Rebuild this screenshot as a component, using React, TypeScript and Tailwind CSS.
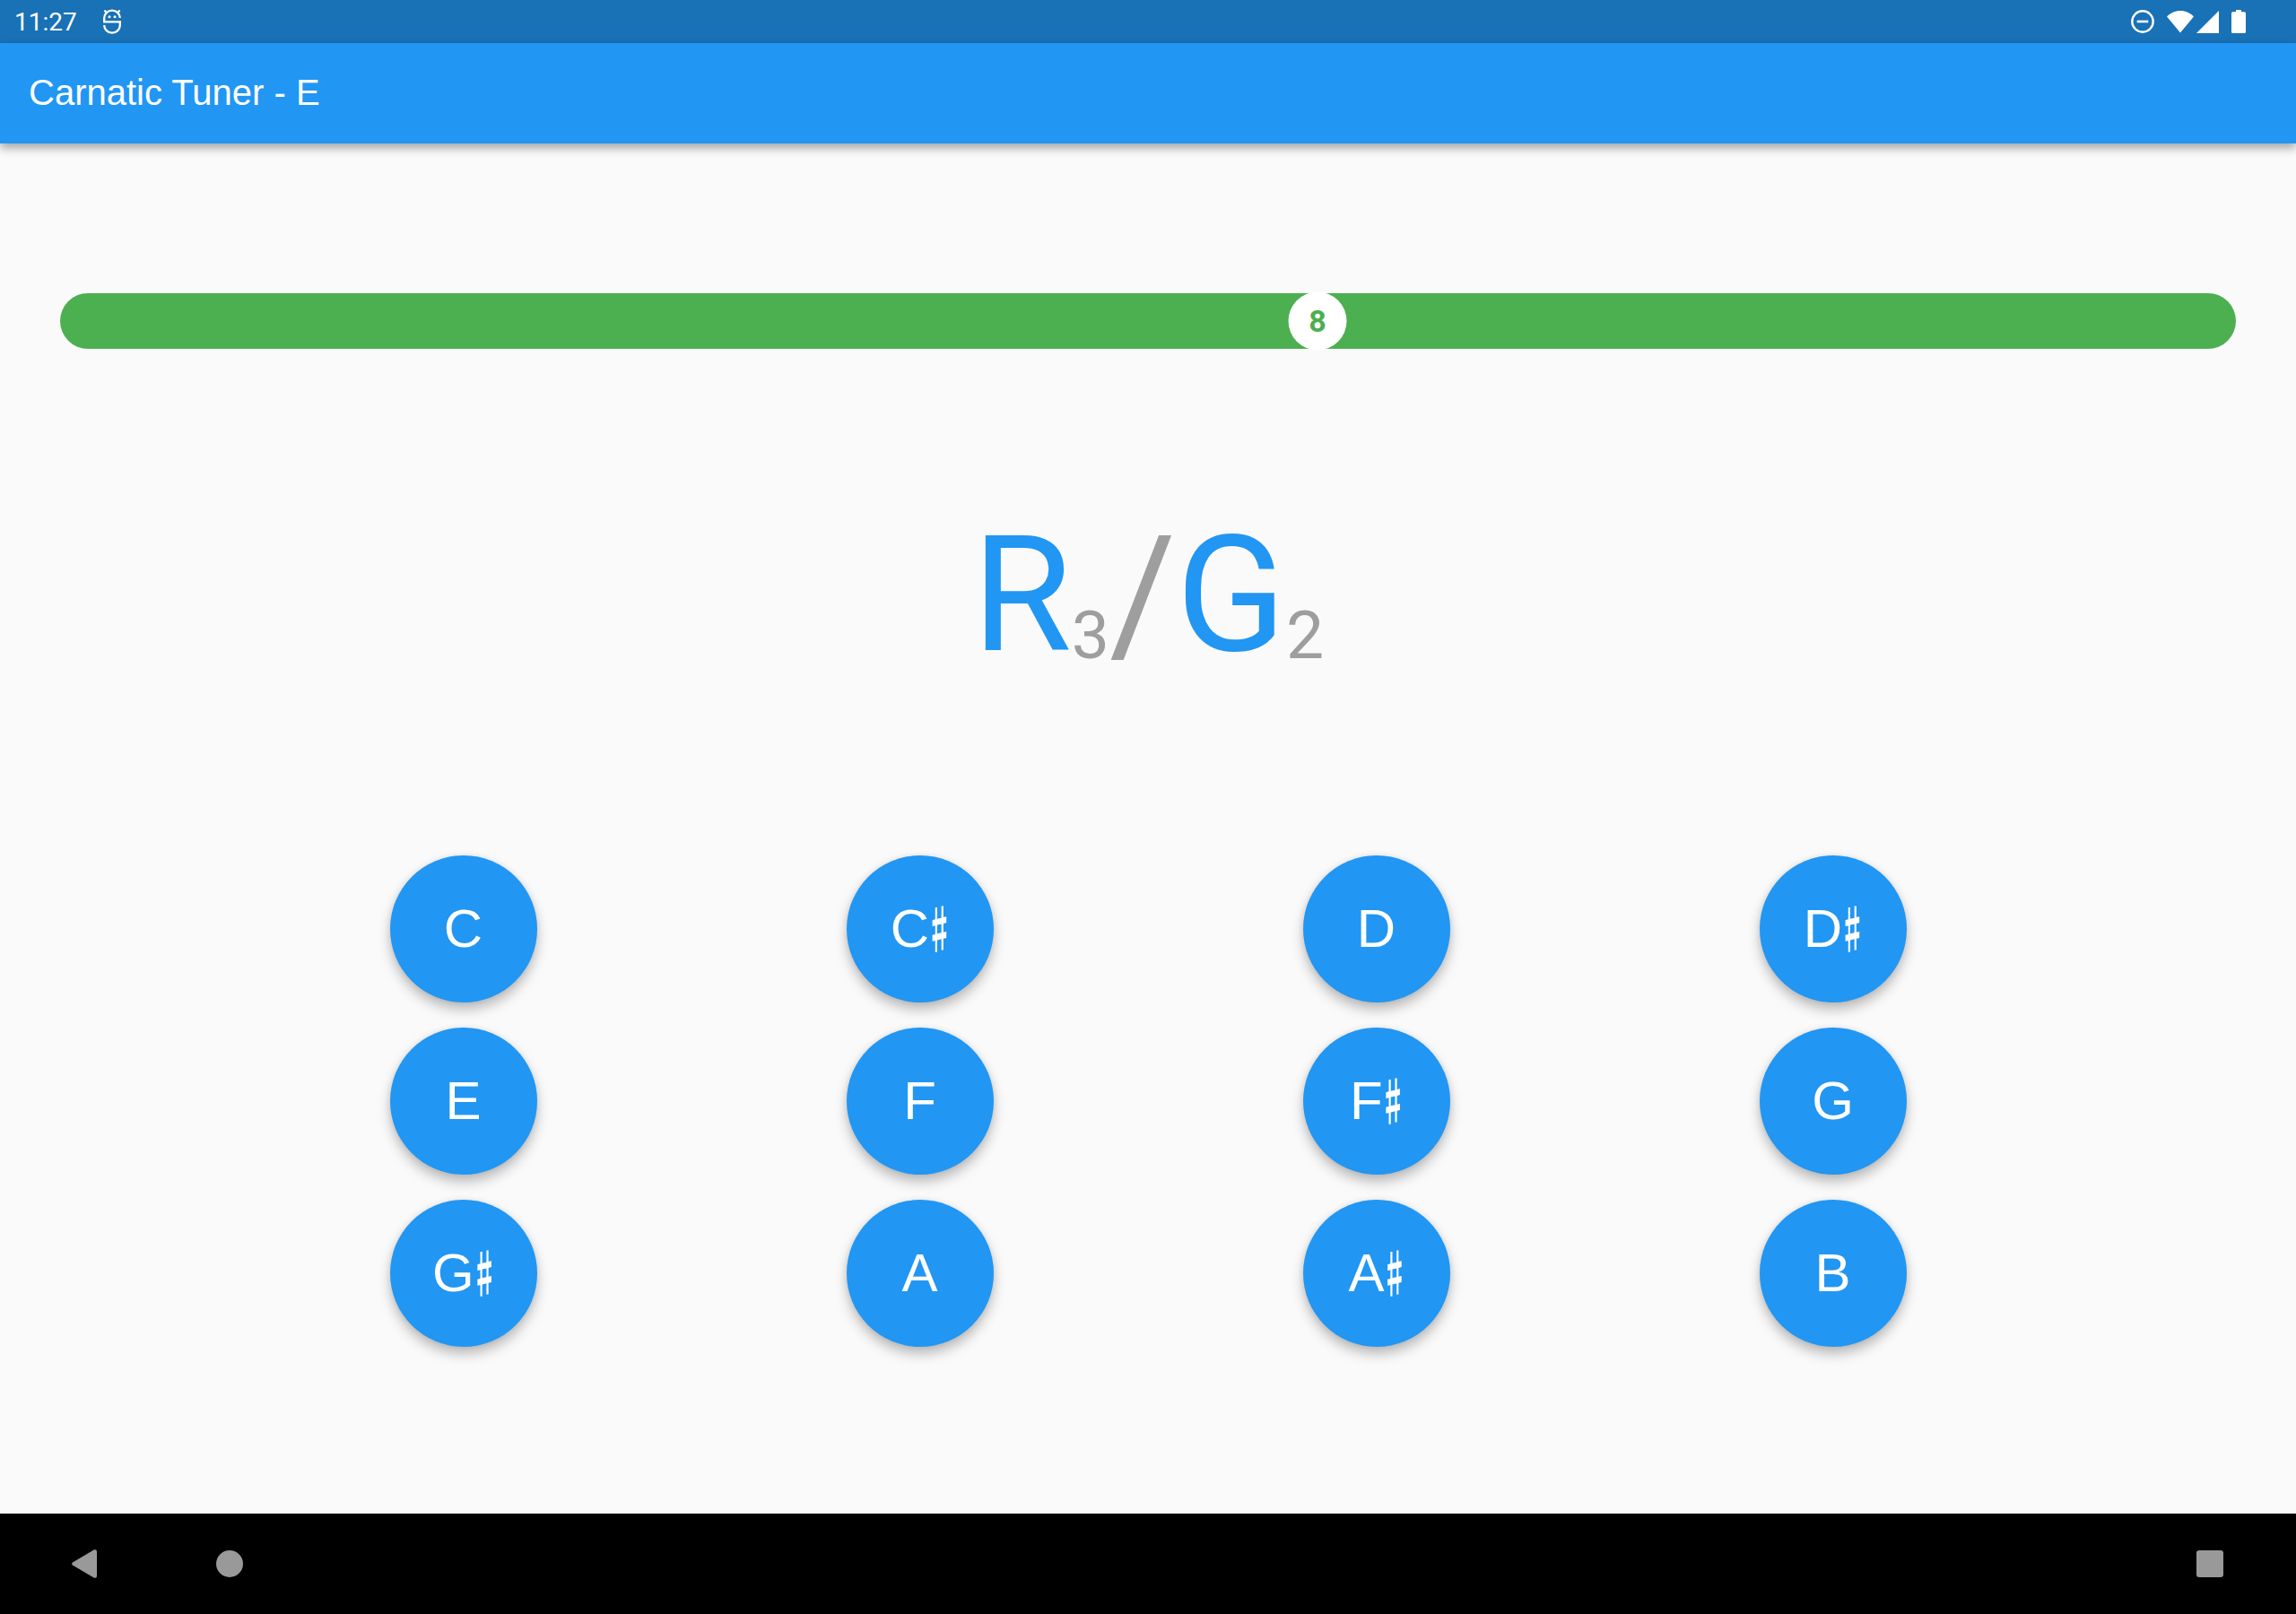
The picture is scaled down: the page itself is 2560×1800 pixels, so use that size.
const NOTES = ["C", "C♯", "D", "D♯", "E", "F", "F♯", "G", "G♯", "A", "A♯", "B"];

const CENTS = 8;

function DebugIcon() {
  return (
    <svg className="h-7 w-5" viewBox="0 0 20 28" fill="none" stroke="#fff" strokeWidth="2.300" aria-hidden="true">
      <path d="M18.800 10A8.800 8.300 0 0 0 1.200 10V14.300H18.800V18A8.800 8.600 0 0 1 1.200 18" />
      <path d="M1.500 1.500L4.500 5M18.500 1.500L15.500 5" />
      <circle cx="7" cy="8.700" r="1.500" fill="#fff" stroke="none" />
      <circle cx="13" cy="8.700" r="1.500" fill="#fff" stroke="none" />
    </svg>
  );
}

function StatusBar() {
  return (
    <div className="flex h-12 items-center justify-between bg-[#1971b6] pl-4 pr-14 text-white">
      <div className="flex items-center gap-[29px]">
        <time className="pt-0.5 font-[Roboto,sans-serif] text-[28px] leading-8">11:27</time>
        <DebugIcon />
      </div>
      <div className="flex items-center">
        <svg className="h-[26px] w-[26px]" viewBox="0 0 26 26" fill="none" stroke="#fff" role="img" aria-label="Do not disturb">
          <circle cx="13" cy="13" r="11.700" strokeWidth="2.400" />
          <path d="M6.700 13H19.300" strokeWidth="2.600" />
        </svg>
        <svg className="ml-3.5 h-[26px] w-[30px]" viewBox="0 0 30 26" fill="#fff" role="img" aria-label="Wi-Fi">
          <path d="M15 25.500L0 7.500C4 3.500 9 1 15 1S26 3.500 30 7.500Z" />
        </svg>
        <svg className="ml-[3px] h-[26px] w-[25px]" viewBox="0 0 25 26" fill="#fff" role="img" aria-label="Signal">
          <path d="M25 1V26H0Z" />
        </svg>
        <svg className="ml-3.5 h-[26px] w-4" viewBox="0 0 16 26" fill="#fff" role="img" aria-label="Battery">
          <path d="M5 0H11V2.200H14.500Q16 2.200 16 3.700V24.500Q16 26 14.500 26H1.500Q0 26 0 24.500V3.700Q0 2.200 1.500 2.200H5Z" />
        </svg>
      </div>
    </div>
  );
}

function TuningMeter({ cents }: { cents: number }) {
  return (
    <div className="mx-[67px] h-[62px] rounded-full bg-[#4caf50] px-8" role="meter" aria-label="Cents" aria-valuemin={-50} aria-valuemax={50} aria-valuenow={cents}>
      <div className="relative h-full">
        <span
          className="absolute top-1/2 flex size-[65px] -translate-x-1/2 -translate-y-1/2 items-center justify-center rounded-full bg-white font-[Roboto,sans-serif] text-[34px] font-bold text-[#4caf50]"
          style={{ left: `${50 + cents}%` }}
        >
          {cents}
        </span>
      </div>
    </div>
  );
}

function NoteButton({ note }: { note: string }) {
  return (
    <button
      type="button"
      className="size-[164px] rounded-full bg-[#2196f3] text-[60px] leading-[68px] text-white shadow-[0_8px_14px_rgba(0,0,0,0.25),0_0_6px_rgba(0,0,0,0.08)]"
    >
      {note[0]}
      {note.length > 1 && (
        <span className="align-[11px] font-['Noto_Music','Liberation_Sans',sans-serif] text-[68px] leading-[0px]">{note[1]}</span>
      )}
    </button>
  );
}

function NavBar() {
  return (
    <nav className="flex h-28 items-center justify-between bg-black pl-20 pr-[81px] text-[#999]">
      <div className="flex items-center gap-[133px]">
        <button type="button" aria-label="Back">
          <svg className="h-8 w-7" viewBox="0 0 28 32" fill="currentColor">
            <path d="M1 14.400L25 0.300Q28 -0.500 28 2.500V29.500Q28 32.500 25 31.700L1 17.600Q-0.800 16 1 14.400Z" />
          </svg>
        </button>
        <button type="button" aria-label="Home" className="size-[30px] rounded-full bg-[#999]" />
      </div>
      <button type="button" aria-label="Overview" className="size-[30px] rounded-[3px] bg-[#999]" />
    </nav>
  );
}

export default function App() {
  return (
    <div className="flex min-h-screen flex-col bg-[#fafafa] font-['Liberation_Sans',sans-serif]">
      <StatusBar />
      <header className="flex h-28 items-center bg-[#2196f3] px-8 pb-0.5 text-white shadow-[0_5px_10px_rgba(0,0,0,0.35)]">
        <h1 className="text-[40px] leading-12">Carnatic Tuner - E</h1>
      </header>
      <main className="flex flex-1 flex-col pt-[167px]">
        <TuningMeter cents={CENTS} />
        <p className="mt-[169px] text-center font-[Roboto,sans-serif] text-[180px] leading-[212px] text-[#2196f3]">
          R<span className="align-[-9px] text-[75px] leading-none text-[#9e9e9e]">3</span>
          <span className="text-[#9e9e9e]">/</span>
          G<span className="align-[-9px] text-[75px] leading-none text-[#9e9e9e]">2</span>
        </p>
        <div className="mt-[184px] grid grid-cols-4 justify-items-center gap-y-7 px-[262px]">
          {NOTES.map((note) => (
            <NoteButton key={note} note={note} />
          ))}
        </div>
      </main>
      <NavBar />
    </div>
  );
}
